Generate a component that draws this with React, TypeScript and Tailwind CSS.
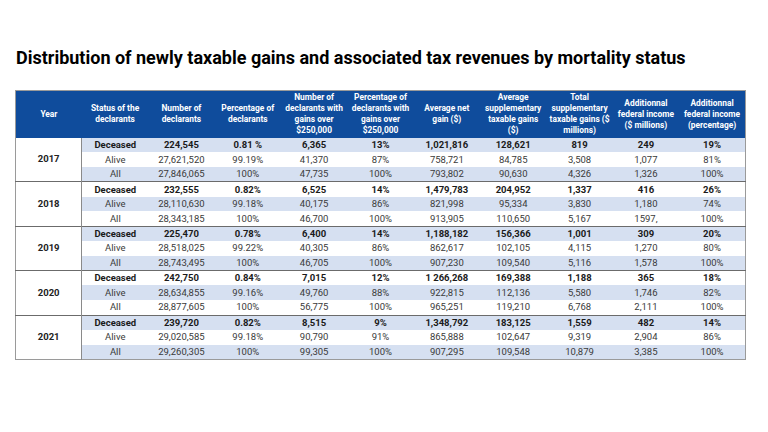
const headers = [
  "Year",
  "Status of the declarants",
  "Number of declarants",
  "Percentage of declarants",
  "Number of declarants with gains over $250,000",
  "Percentage of declarants with gains over $250,000",
  "Average net gain ($)",
  "Average supplementary taxable gains ($)",
  "Total supplementary taxable gains ($ millions)",
  "Additionnal federal income ($ millions)",
  "Additionnal federal income (percentage)",
]

const groups = [
  {
    year: "2017",
    rows: [
      ["Deceased", "224,545", "0.81 %", "6,365", "13%", "1,021,816", "128,621", "819", "249", "19%"],
      ["Alive", "27,621,520", "99.19%", "41,370", "87%", "758,721", "84,785", "3,508", "1,077", "81%"],
      ["All", "27,846,065", "100%", "47,735", "100%", "793,802", "90,630", "4,326", "1,326", "100%"],
    ],
  },
  {
    year: "2018",
    rows: [
      ["Deceased", "232,555", "0.82%", "6,525", "14%", "1,479,783", "204,952", "1,337", "416", "26%"],
      ["Alive", "28,110,630", "99.18%", "40,175", "86%", "821,998", "95,334", "3,830", "1,180", "74%"],
      ["All", "28,343,185", "100%", "46,700", "100%", "913,905", "110,650", "5,167", "1597,", "100%"],
    ],
  },
  {
    year: "2019",
    rows: [
      ["Deceased", "225,470", "0.78%", "6,400", "14%", "1,188,182", "156,366", "1,001", "309", "20%"],
      ["Alive", "28,518,025", "99.22%", "40,305", "86%", "862,617", "102,105", "4,115", "1,270", "80%"],
      ["All", "28,743,495", "100%", "46,705", "100%", "907,230", "109,540", "5,116", "1,578", "100%"],
    ],
  },
  {
    year: "2020",
    rows: [
      ["Deceased", "242,750", "0.84%", "7,015", "12%", "1 266,268", "169,388", "1,188", "365", "18%"],
      ["Alive", "28,634,855", "99.16%", "49,760", "88%", "922,815", "112,136", "5,580", "1,746", "82%"],
      ["All", "28,877,605", "100%", "56,775", "100%", "965,251", "119,210", "6,768", "2,111", "100%"],
    ],
  },
  {
    year: "2021",
    rows: [
      ["Deceased", "239,720", "0.82%", "8,515", "9%", "1,348,792", "183,125", "1,559", "482", "14%"],
      ["Alive", "29,020,585", "99.18%", "90,790", "91%", "865,888", "102,647", "9,319", "2,904", "86%"],
      ["All", "29,260,305", "100%", "99,305", "100%", "907,295", "109,548", "10,879", "3,385", "100%"],
    ],
  },
]

export default function App() {
  return (
    <div className="w-[768px] h-[432px] bg-white font-['Roboto','Liberation_Sans',sans-serif] overflow-hidden">
      <h1 className="pt-[46px] pl-[16px] text-[18px] leading-[24px] font-bold text-black">
        Distribution of newly taxable gains and associated tax revenues by mortality status
      </h1>
      <div className="pl-[15px] pt-[20px]">
        <table className="w-[731px] table-fixed border-collapse border border-[#9a9a9a]">
          <thead>
            <tr className="bg-[#0f4c9c] h-[47px]">
              {headers.map((h) => (
                <th key={h} className="px-[2.5px] text-[8.4px] leading-[11px] font-bold text-white text-center align-middle">
                  {h}
                </th>
              ))}
            </tr>
          </thead>
          <tbody>
            {groups.map((g, gi) =>
              g.rows.map((r, ri) => {
                const idx = gi * 3 + ri
                const stripe = idx % 2 === 0 ? "bg-[#d6e0f1]" : "bg-white"
                const bold = ri === 0
                return (
                  <tr key={g.year + ri} className={`h-[14.8px] ${ri === 0 && gi > 0 ? "border-t border-[#6b6b6b]" : ""}`}>
                    {ri === 0 && (
                      <td rowSpan={3} className="bg-white border-r border-[#8a8a8a] text-center text-[9.5px] font-bold text-[#222] align-middle">
                        {g.year}
                      </td>
                    )}
                    {r.map((c, ci) => (
                      <td
                        key={ci}
                        className={`${stripe} p-0 text-center text-[9.5px] leading-[14px] ${bold ? "font-bold text-[#1a1a1a]" : "text-[#3a3a3a]"}`}
                      >
                        {c}
                      </td>
                    ))}
                  </tr>
                )
              })
            )}
          </tbody>
        </table>
      </div>
    </div>
  )
}
